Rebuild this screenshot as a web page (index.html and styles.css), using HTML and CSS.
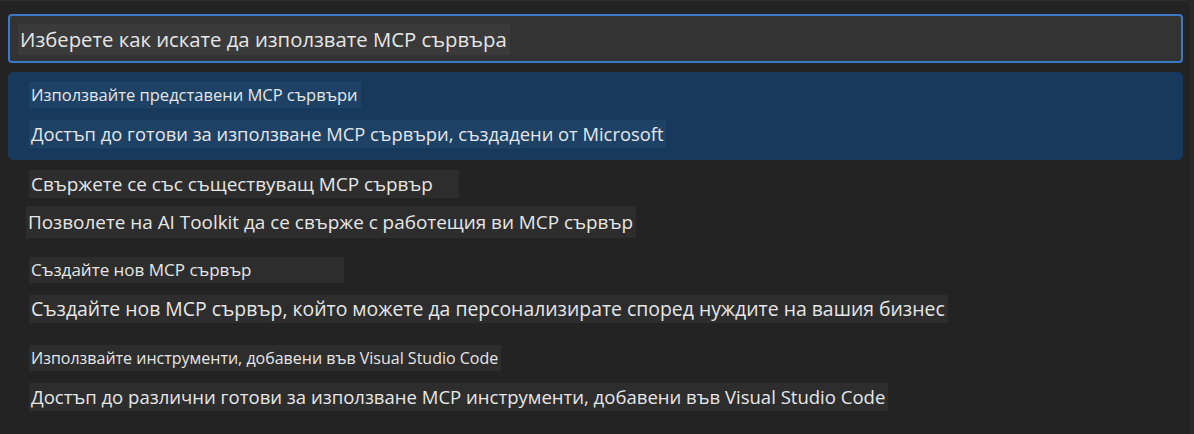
FILE: index.html
```html
<!DOCTYPE html>
<html lang="bg">
<head>
<meta charset="utf-8">
<title>MCP</title>
<link rel="stylesheet" href="styles.css">
</head>
<body>
<div class="widget">
  <div class="input">
    <span class="tbox title">Изберете как искате да използвате MCP сървъра</span>
  </div>
  <div class="list">
    <div class="item selected">
      <span class="tbox small s-a">Използвайте представени MCP сървъри</span>
      <span class="tbox large l-a">Достъп до готови за използване MCP сървъри, създадени от Microsoft</span>
    </div>
    <div class="item">
      <span class="tbox large l-b wide-a">Свържете се със съществуващ MCP сървър</span>
      <span class="tbox large l-b tall shift">Позволете на AI Toolkit да се свърже с работещия ви MCP сървър</span>
    </div>
    <div class="item">
      <span class="tbox small s-b wide-b">Създайте нов MCP сървър</span>
      <span class="tbox large l-c">Създайте нов MCP сървър, който можете да персонализирате според нуждите на вашия бизнес</span>
    </div>
    <div class="item">
      <span class="tbox small s-c">Използвайте инструменти, добавени във Visual Studio Code</span>
      <span class="tbox large l-d">Достъп до различни готови за използване MCP инструменти, добавени във Visual Studio Code</span>
    </div>
  </div>
</div>
</body>
</html>
```

FILE: styles.css
```css
html, body {
  margin: 0;
  padding: 0;
  background: #292929;
}

body {
  width: 1194px;
  height: 434px;
  overflow: hidden;
  font-family: "Open Sans", "Noto Sans", sans-serif;
  color: #e6e6e6;
}

.widget {
  box-sizing: border-box;
  width: 1190px;
  height: 434px;
  padding: 14px 7px 0 8px;
  background: #232323;
  border-top: 1px solid #2e2e2e;
  border-top-right-radius: 8px;
}

.input {
  box-sizing: border-box;
  height: 49px;
  border: 2px solid #3b78c6;
  border-radius: 4px;
  background: #333333;
  padding: 8px 8px 0 8px;
  margin-top: -1px;
}

.list {
  display: flex;
  flex-direction: column;
  margin-top: 9px;
}

.item {
  box-sizing: border-box;
  height: 87.7px;
  padding: 10px 0 0 21px;
  display: flex;
  flex-direction: column;
  align-items: flex-start;
}

.item.selected {
  background: #173a5c;
  border-radius: 5px;
}

.tbox {
  display: inline-block;
  background: #2d2d2d;
  padding: 0 3px 0 2px;
  white-space: nowrap;
}

.selected .tbox {
  background: #1d4266;
}

.title {
  background: #3a3a3a;
  font-size: 20.3px;
  line-height: 31px;
  padding: 0 3px 0 2px;
}

.small {
  line-height: 26px;
  height: 26px;
  margin-bottom: 12px;
}

.large {
  line-height: 28px;
  height: 28px;
}

.s-a { font-size: 16.5px; }
.s-b { font-size: 17px; }
.s-c { font-size: 16px; }

.l-a { font-size: 18.35px; }
.l-b { font-size: 18.9px; }
.l-c { font-size: 19.4px; }
.l-d { font-size: 18.55px; }

.tall {
  line-height: 32px;
  height: 32px;
}

.wide-a {
  margin-bottom: 8px;
  padding-right: 26px;
}

.wide-b {
  padding-right: 93px;
}

.shift {
  margin-left: -3px;
}
```
